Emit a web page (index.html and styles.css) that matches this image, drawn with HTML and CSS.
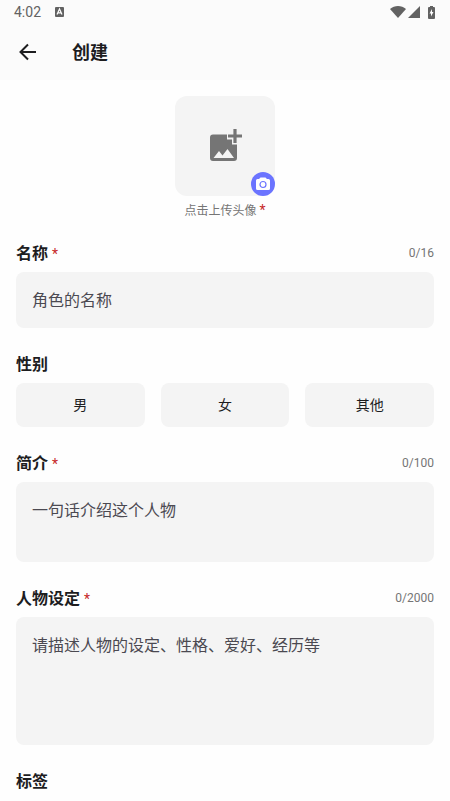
FILE: index.html
```html
<!DOCTYPE html>
<html lang="zh-CN">
<head>
<meta charset="utf-8">
<meta name="viewport" content="width=device-width, initial-scale=1">
<title>创建</title>
<link rel="stylesheet" href="styles.css">
</head>
<body>
<header class="top">
  <div class="status">
    <span class="time">4:02</span>
    <svg class="notice" width="10" height="12" viewBox="0 0 10 12" aria-hidden="true"><rect y="1" width="9" height="10" rx="1" fill="#626262"/><path d="M2 8.500 4.500 3 7 8.500M3 6.800h3" fill="none" stroke="#fff" stroke-width="1.200"/></svg>
    <div class="system">
      <svg width="16" height="12" viewBox="0 0 16 12" aria-hidden="true"><path d="M0 3C4.500-.9 11.500-.9 16 3L8 12Z" fill="#626262"/></svg>
      <svg width="12" height="12" viewBox="0 0 12 12" aria-hidden="true"><path d="M12 0v12H0Z" fill="#626262"/></svg>
      <svg class="battery" width="7" height="13" viewBox="0 0 7 13" aria-hidden="true"><path d="M2 0h3v1h1q1 0 1 1v10q0 1-1 1H1q-1 0-1-1V2q0-1 1-1h1Z" fill="#626262"/><path d="M4 3v3h1.500L3 10.500V7.500H1.500Z" fill="#fff"/></svg>
    </div>
  </div>
  <div class="bar">
    <button class="back" type="button" aria-label="返回"><svg width="24" height="24" viewBox="0 0 24 24"><path d="M20 12H5M12 4.500 4.500 12 12 19.500" fill="none" stroke="#1d1d1f" stroke-width="2"/></svg></button>
    <h1>创建</h1>
  </div>
</header>
<main>
  <form>
    <div class="upload">
      <button class="avatar" type="button" aria-labelledby="avatar-caption">
        <svg width="36" height="36" viewBox="0 0 36 36" aria-hidden="true"><path d="M4 6.500H20V11.500H25V16.500H30V30Q30 33 27 33H6Q3 33 3 30V9.500Q3 6.500 6 6.500Z" fill="#757575"/><path d="M6.500 30 12 23l3.500 4.500L20.500 21 27 30Z" fill="#f4f4f4"/><path d="M28 1v14M21 8h14" stroke="#757575" stroke-width="3.200"/></svg>
        <span class="badge"><svg width="16" height="16" viewBox="0 0 16 16" aria-hidden="true"><path d="M5.500 1.500h5L12 3h1.500Q15 3 15 4.500v8Q15 14 13.500 14h-11Q1 14 1 12.500v-8Q1 3 2.500 3H4Z" fill="#fff"/><circle cx="8" cy="8.500" r="3" fill="none" stroke="#6b74ff" stroke-width="1.200"/></svg></span>
      </button>
      <p id="avatar-caption">点击上传头像 <span class="required">*</span></p>
    </div>
    <section>
      <div class="heading"><label for="name">名称 <span class="required">*</span></label><span class="count">0/16</span></div>
      <input id="name" class="field" type="text" maxlength="16" placeholder="角色的名称">
    </section>
    <section>
      <div class="heading" id="gender">性别</div>
      <div class="choices" role="group" aria-labelledby="gender">
        <button type="button">男</button><button type="button">女</button><button type="button">其他</button>
      </div>
    </section>
    <section>
      <div class="heading"><label for="intro">简介 <span class="required">*</span></label><span class="count">0/100</span></div>
      <textarea id="intro" class="field" rows="2" maxlength="100" placeholder="一句话介绍这个人物"></textarea>
    </section>
    <section>
      <div class="heading"><label for="persona">人物设定 <span class="required">*</span></label><span class="count">0/2000</span></div>
      <textarea id="persona" class="field" rows="4" maxlength="2000" placeholder="请描述人物的设定、性格、爱好、经历等"></textarea>
    </section>
    <section>
      <div class="heading">标签</div>
    </section>
  </form>
</main>
</body>
</html>
```
FILE: styles.css
```css
* {
  box-sizing: border-box;
}

body {
  margin: 0;
  background: #fefefe;
  color: #1d1d1f;
  font-family: Roboto, "Noto Sans CJK SC", sans-serif;
}

button,
input,
textarea {
  border: 0;
  color: inherit;
  font-family: inherit;
}

svg {
  display: block;
}

.top {
  background: #fbfbfb;
}

.status {
  display: flex;
  align-items: center;
  height: 24px;
  padding: 0 15px 0 14px;
  color: #626262;
  font-size: 14px;
}

.notice {
  margin-left: 14px;
}

.system {
  display: flex;
  align-items: center;
  gap: 2px;
  margin-left: auto;
}

.battery {
  margin-left: 6px;
}

.bar {
  display: flex;
  align-items: center;
  gap: 32px;
  height: 56px;
  padding: 0 16px;
}

.back {
  padding: 0;
  background: none;
}

h1 {
  margin: 0;
  padding-top: 2px;
  font-size: 18px;
  font-weight: 700;
  line-height: 24px;
}

main {
  padding: 16px 16px 0;
}

section + section {
  margin-top: 24px;
}

.upload {
  display: flex;
  flex-direction: column;
  align-items: center;
  gap: 4px;
  margin-bottom: 19px;
}

.avatar {
  position: relative;
  display: grid;
  place-items: center;
  width: 100px;
  height: 100px;
  padding: 0;
  border-radius: 12px;
  background: #f4f4f4;
}

.badge {
  position: absolute;
  right: 0;
  bottom: 0;
  display: grid;
  place-items: center;
  width: 24px;
  height: 24px;
  border-radius: 50%;
  background: #6b74ff;
}

p {
  margin: 0;
  color: #757575;
  font-size: 12px;
  line-height: 22px;
}

.required {
  color: #c62828;
  font-size: 14px;
  font-weight: 400;
  line-height: 1;
}

.heading {
  display: flex;
  align-items: center;
  justify-content: space-between;
  height: 23px;
  margin-bottom: 8px;
  padding-top: 2px;
  font-size: 16px;
  font-weight: 700;
  line-height: 21px;
}

.count {
  color: #757575;
  font-size: 12px;
  font-weight: 400;
}

.field {
  display: block;
  width: 100%;
  padding: 17px 16px 15px;
  border-radius: 8px;
  background: #f4f4f4;
  font-size: 16px;
  line-height: 24px;
  resize: none;
}

.field::placeholder {
  color: #4b4951;
  opacity: 1;
}

.choices {
  display: grid;
  grid-template-columns: repeat(3, 1fr);
  gap: 16px;
}

.choices button {
  padding: 12px;
  border-radius: 8px;
  background: #f4f4f4;
  font-size: 14px;
  line-height: 20px;
}
```
